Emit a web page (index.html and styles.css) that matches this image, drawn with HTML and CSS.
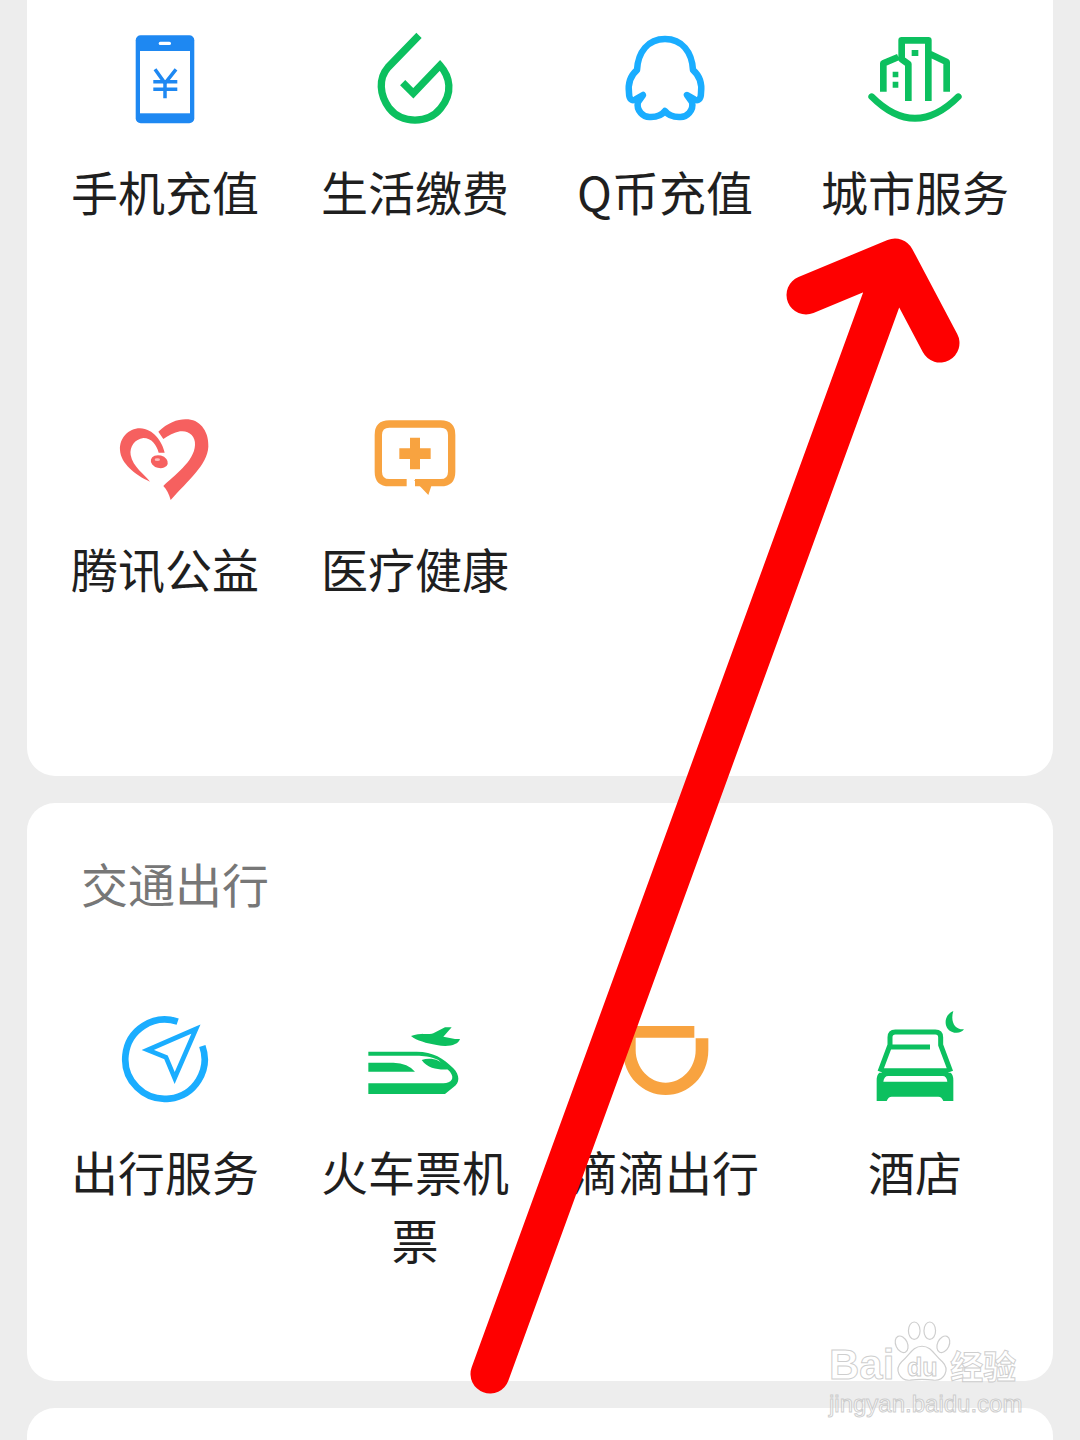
FILE: index.html
```html
<!DOCTYPE html>
<html lang="zh-CN">
<head>
<meta charset="utf-8">
<title>服务</title>
<link rel="stylesheet" href="styles.css">
</head>
<body>
<main class="page">
  <section class="card card-first">
    <div class="grid">
      <div class="item">
        <svg class="icon" viewBox="0 0 100 100"><rect class="fill-phone" x="20.7" y="5.3" width="58.6" height="88" rx="5"/><rect class="fill-white" x="25" y="21" width="50" height="62.3"/><rect class="fill-white" x="43.7" y="11.7" width="12.3" height="3.3" rx="1.6"/><path class="stroke-phone yen" d="M40 39.3 50 53.3 61 39.3M38.3 51.7H62.3M38.3 59.3H62.3M50 53V68.3"/></svg>
        <div class="label">手机充值</div>
      </div>
      <div class="item">
        <svg class="icon" viewBox="795 30 300 300"><path class="stroke-green thick" d="M957 46 864 142C835 175 838 225 868 265 905 312 985 312 1022 265 1060 218 1050 170 1020 136L940 220 908 188"/></svg>
        <div class="label">生活缴费</div>
      </div>
      <div class="item">
        <svg class="icon" viewBox="0 0 100 100"><path class="stroke-blue qq" d="M50 9C33 9 23 22 22 40 15 46 13 55 14 63 14 69 17 72 21 69L28 65 23 72C21 80 28 88 36 87 42 87 47 85 50 81 53 85 58 87 64 87 72 88 79 80 77 72L72 65 79 69C83 72 86 69 86 63 87 55 85 46 78 40 77 22 67 9 50 9Z"/></svg>
        <div class="label">Q币充值</div>
      </div>
      <div class="item">
        <svg class="icon" viewBox="795 30 300 300"><path class="stroke-green city" d="M850 215V130L895 111M925 243V132L905 118V61H985V243M990 102 1040 126V215"/><path class="stroke-green city-arc" d="M815 230Q945 360 1075 230"/><path class="fill-green" d="M935 90H955V108H935ZM878 155H895V172H878ZM878 185H895V203H878Z"/></svg>
        <div class="label">城市服务</div>
      </div>
      <div class="item">
        <svg class="icon" viewBox="45 21 300 300"><path class="fill-red" d="M175 95C205 65 240 55 265 58 305 62 327 100 325 140 322 195 265 240 212 300 207 282 200 268 190 258 220 228 283 185 285 135 287 107 265 90 240 94 222 97 205 107 190 117Z"/><path class="fill-red" d="M194 158C187 125 160 86 120 85 85 85 58 115 60 150 62 190 105 225 150 245 135 225 98 200 92 165 88 140 105 117 130 114 155 114 170 135 176 158Z"/><ellipse class="fill-red" cx="178" cy="185" rx="26" ry="19" transform="rotate(15 178 185)"/><ellipse class="bean-shine" cx="172" cy="179" rx="8" ry="4"/></svg>
        <div class="label">腾讯公益</div>
      </div>
      <div class="item">
        <svg class="icon" viewBox="795 21 300 300"><path class="stroke-orange bubble" d="M920 248H868Q835 248 835 215V105Q835 72 868 72H1022Q1055 72 1055 105V215Q1055 248 1022 248H945"/><path class="fill-orange" d="M942 240H1000L985 285ZM930 113H960V145H992V177H960V208H930V177H898V145H930Z"/></svg>
        <div class="label">医疗健康</div>
      </div>
    </div>
  </section>

  <section class="card card-second">
    <h2 class="title">交通出行</h2>
    <div class="grid">
      <div class="item">
        <svg class="icon" viewBox="45 30 300 300"><path class="stroke-blue ring" d="M233 65A119 119 0 1 0 307 138"/><path class="stroke-blue dart" d="M288 87 143 150 198 172 224 234Z"/></svg>
        <div class="label">出行服务</div>
      </div>
      <div class="item">
        <svg class="icon" viewBox="795 30 300 300"><path class="fill-green" d="M933 108C960 98 990 105 1000 100L1035 82H1055L1030 110 1065 117H1080C1075 135 1045 142 1010 135 980 130 950 122 933 108Z"/><path class="fill-green" d="M805 155H950C1000 155 1030 175 1060 205 1080 225 1080 250 1060 262L1035 282H805V250H1030C1055 248 1065 235 1050 215 1040 205 1030 195 1015 180 990 168 970 168 950 167H805Z"/><path class="fill-green" d="M805 188H880Q925 190 945 215H805ZM965 180C980 175 1000 175 1015 182 1030 190 1040 200 1045 208 1020 210 985 208 965 180Z"/></svg>
        <div class="label">火车票机票</div>
      </div>
      <div class="item">
        <svg class="icon" viewBox="45 30 300 300"><path class="fill-orange" d="M69 78H283V113H107V150C107 205 150 248 197 248 245 248 287 205 287 150V115H325V150C325 230 265 285 197 285 130 285 69 230 69 150Z"/></svg>
        <div class="label">滴滴出行</div>
      </div>
      <div class="item">
        <svg class="icon" viewBox="795 30 300 300"><path class="fill-green" d="M1060 33C1030 45 1030 85 1055 95 1070 102 1085 98 1092 88 1065 90 1050 65 1060 33Z"/><path class="stroke-green bed" d="M870 135V112Q870 96 886 96H1006Q1022 96 1022 112V135L1052 215M870 135 840 215M870 141H990M845 212H1045"/><path class="fill-green" d="M830 240Q830 225 838 218H1052Q1060 225 1060 240V303H1030Q1025 290 1015 290H875Q865 290 860 303H830Z"/><path class="fill-white" d="M850 245Q852 228 865 228H1028Q1040 228 1042 245Z"/></svg>
        <div class="label">酒店</div>
      </div>
    </div>
  </section>

  <section class="card card-third"></section>
</main>

<svg class="arrow" viewBox="0 0 1080 1440"><path d="M490 1374 895 262M806 295 895 258 940 343"/></svg>

<div class="watermark">
  <div class="wm-top">
    <span class="wm-bai">Bai</span>
    <span class="wm-paw">
      <svg class="wm-paw-svg" viewBox="0 0 60 66"><ellipse cx="9" cy="24" rx="6" ry="9" transform="rotate(-25 9 24)"/><ellipse cx="22" cy="10" rx="6" ry="9"/><ellipse cx="38" cy="10" rx="6" ry="9"/><ellipse cx="52" cy="24" rx="6" ry="9" transform="rotate(25 52 24)"/><path d="M30 26C20 26 17 36 9 42 1 50 7 62 18 61 26 60 34 60 42 61 53 62 59 50 51 42 43 36 40 26 30 26Z"/></svg>
      <span class="wm-du">du</span>
    </span>
    <span class="wm-cn">经验</span>
  </div>
  <div class="wm-url">jingyan.baidu.com</div>
</div>
</body>
</html>
```
FILE: styles.css
```css
* { box-sizing: border-box; }
html, body { margin: 0; height: 1440px; overflow: hidden; background: #ededed; }
body { font-family: "Noto Sans CJK SC", "Noto Sans", sans-serif; color: #1f1f1f; position: relative; }
.page { display: flex; flex-direction: column; gap: 27px; padding: 0 27px; }
.card { background: #fff; border-radius: 28px; padding: 0 13px; }
.card-first { border-radius: 0 0 28px 28px; padding-top: 30px; padding-bottom: 60px; }
.card-second { padding-top: 46px; padding-bottom: 62px; }
.card-third { height: 100px; }
.title { margin: 0 0 93px 41px; font-size: 47px; font-weight: 400; line-height: 68px; color: #777; }
.grid { display: grid; grid-template-columns: repeat(4, 250px); row-gap: 68px; }
.item { height: 309px; display: flex; flex-direction: column; align-items: center; gap: 27px; }
.icon { width: 100px; height: 100px; display: block; flex: none; }
.label { width: 200px; font-size: 47px; line-height: 68px; text-align: center; }

.fill-white { fill: #fff; }
.fill-phone { fill: #1e88f2; }
.fill-green { fill: #0cc05f; }
.fill-red { fill: #f6605f; }
.fill-orange { fill: #f8a340; }
.bean-shine { fill: #fbb; }
.stroke-phone, .stroke-green, .stroke-blue, .stroke-orange { fill: none; }
.stroke-phone { stroke: #1e88f2; }
.stroke-green { stroke: #0cc05f; }
.stroke-blue { stroke: #1aadff; }
.stroke-orange { stroke: #f8a340; }
.yen { stroke-width: 3.5; }
.thick { stroke-width: 22; }
.qq { stroke-width: 6.5; stroke-linejoin: round; }
.city { stroke-width: 20; stroke-linejoin: round; }
.city-arc { stroke-width: 20; stroke-linecap: round; }
.bubble { stroke-width: 22; }
.ring { stroke-width: 20; }
.dart { stroke-width: 14; stroke-linejoin: miter; }
.bed { stroke-width: 15; stroke-linejoin: round; }

.arrow { position: absolute; left: 0; top: 0; width: 1080px; height: 1440px; }
.arrow path { fill: none; stroke: #fe0000; stroke-width: 39; stroke-linecap: round; stroke-linejoin: round; }

.watermark { position: absolute; left: 829px; top: 1323px; width: 200px; font-family: "Liberation Sans", sans-serif; color: rgba(255,255,255,.7); }
.wm-top { display: flex; align-items: flex-end; height: 62px; }
.wm-bai { font-size: 42px; line-height: 40px; font-weight: 700; -webkit-text-stroke: 1px rgba(190,190,190,.75); }
.wm-paw { position: relative; width: 64px; height: 64px; flex: none; margin-left: -4px; }
.wm-paw-svg { width: 64px; height: 64px; display: block; fill: rgba(255,255,255,.7); stroke: rgba(190,190,190,.75); stroke-width: 1.2; }
.wm-du { position: absolute; left: 0; right: 0; bottom: 6px; text-align: center; font-size: 25px; line-height: 24px; font-weight: 700; color: rgba(255,255,255,.7); -webkit-text-stroke: 1px rgba(190,190,190,.8); }
.wm-cn { font-family: "Noto Sans CJK SC", sans-serif; font-size: 33px; line-height: 40px; font-weight: 700; margin-left: -4px; white-space: nowrap; -webkit-text-stroke: 1px rgba(190,190,190,.75); }
.wm-url { font-size: 24px; line-height: 28px; margin-top: 5px; white-space: nowrap; -webkit-text-stroke: 1px rgba(190,190,190,.75); }
```
